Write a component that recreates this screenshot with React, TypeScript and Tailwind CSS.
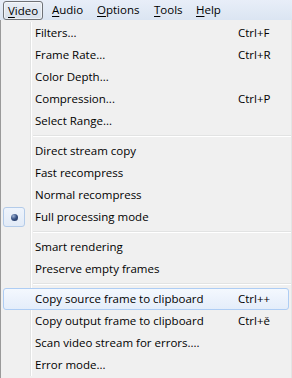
import React from "react";

type Item = { label: string; shortcut?: string; radio?: boolean; hover?: boolean } | "sep";

const items: Item[] = [
  { label: "Filters...", shortcut: "Ctrl+F" },
  { label: "Frame Rate...", shortcut: "Ctrl+R" },
  { label: "Color Depth..." },
  { label: "Compression...", shortcut: "Ctrl+P" },
  { label: "Select Range..." },
  "sep",
  { label: "Direct stream copy" },
  { label: "Fast recompress" },
  { label: "Normal recompress" },
  { label: "Full processing mode", radio: true },
  "sep",
  { label: "Smart rendering" },
  { label: "Preserve empty frames" },
  "sep",
  { label: "Copy source frame to clipboard", shortcut: "Ctrl++", hover: true },
  { label: "Copy output frame to clipboard", shortcut: "Ctrl+ě" },
  { label: "Scan video stream for errors...." },
  { label: "Error mode..." },
];

function Gutter({ children }: { children?: React.ReactNode }) {
  return (
    <>
      <div className="w-[29px] shrink-0 flex items-center">{children}</div>
      <div className="w-[2px] shrink-0 border-l border-[#e2e3e3] bg-white" />
    </>
  );
}

function Label({ label, shortcut }: { label: string; shortcut?: string }) {
  return (
    <>
      <span className="w-[203px] shrink-0 whitespace-nowrap">{label}</span>
      {shortcut && <span className="whitespace-nowrap">{shortcut}</span>}
    </>
  );
}

function Radio() {
  return (
    <div className="ml-[2px] w-[22px] h-[20px] rounded-[3px] border border-[#b3cbe9] bg-gradient-to-b from-[#eef4fc] to-[#e2ebf7] flex items-center justify-center">
      <div className="w-[7px] h-[7px] rounded-full bg-[radial-gradient(circle_at_35%_30%,#9fb4d6_0%,#3a5588_45%,#172a52_100%)]" />
    </div>
  );
}

function MenuTitle({ first, rest, pad, w }: { first: string; rest: string; pad: string; w: string }) {
  return (
    <div className={`${w} ${pad} h-[20px] flex items-center shrink-0`}>
      <span>
        <span className="underline underline-offset-[2px] decoration-1">{first}</span>
        {rest}
      </span>
    </div>
  );
}

export default function App() {
  return (
    <div className="w-[292px] h-[378px] overflow-hidden bg-[#f0f0f0] text-black text-[11.5px] font-['Open_Sans',sans-serif]">
      {/* Menu bar */}
      <div className="h-[20px] flex items-center bg-gradient-to-b from-[#e8eef8] to-[#dbe5f2] pl-[3px]">
        <div className="w-[40px] h-[19px] mt-[1px] rounded-[3px] border border-[#6f7277] bg-gradient-to-b from-[#e9eef5] to-[#d7e0eb] shadow-[inset_0_0_0_1px_rgba(255,255,255,0.55)] flex items-center pl-[4px] shrink-0">
          <span>
            <span className="underline underline-offset-[2px] decoration-1">V</span>ideo
          </span>
        </div>
        <MenuTitle first="A" rest="udio" pad="pl-[9px]" w="w-[46px]" />
        <MenuTitle first="O" rest="ptions" pad="pl-[8px]" w="w-[57px]" />
        <MenuTitle first="T" rest="ools" pad="pl-[8px]" w="w-[42px]" />
        <MenuTitle first="H" rest="elp" pad="pl-[8px]" w="w-[50px]" />
      </div>

      {/* Drop-down */}
      <div className="h-[358px] border-l border-[#9a9a9a] border-r border-r-[#e4e4e4] bg-[#f0f0f0] pt-[2px] flex flex-col">
        {items.map((it, i) => {
          if (it === "sep") {
            return (
              <div key={i} className="h-[8px] flex shrink-0">
                <Gutter />
                <div className="flex-1 pt-[3px] pl-[1px]">
                  <div className="h-[1px] bg-[#e2e3e3]" />
                  <div className="h-[1px] bg-white" />
                </div>
              </div>
            );
          }
          if (it.hover) {
            return (
              <div key={i} className="h-[22px] shrink-0 flex">
                <div className="ml-[2px] mr-[2px] flex-1 h-[22px] rounded-[3px] border border-[#aecdf4] bg-gradient-to-b from-[#f4f8fe] to-[#e4edfa] flex items-center pl-[31px]">
                  <Label label={it.label} shortcut={it.shortcut} />
                </div>
              </div>
            );
          }
          return (
            <div key={i} className="h-[22px] shrink-0 flex">
              <Gutter>{it.radio && <Radio />}</Gutter>
              <div className="flex-1 flex items-center pl-[3px]">
                <Label label={it.label} shortcut={it.shortcut} />
              </div>
            </div>
          );
        })}
      </div>
    </div>
  );
}
